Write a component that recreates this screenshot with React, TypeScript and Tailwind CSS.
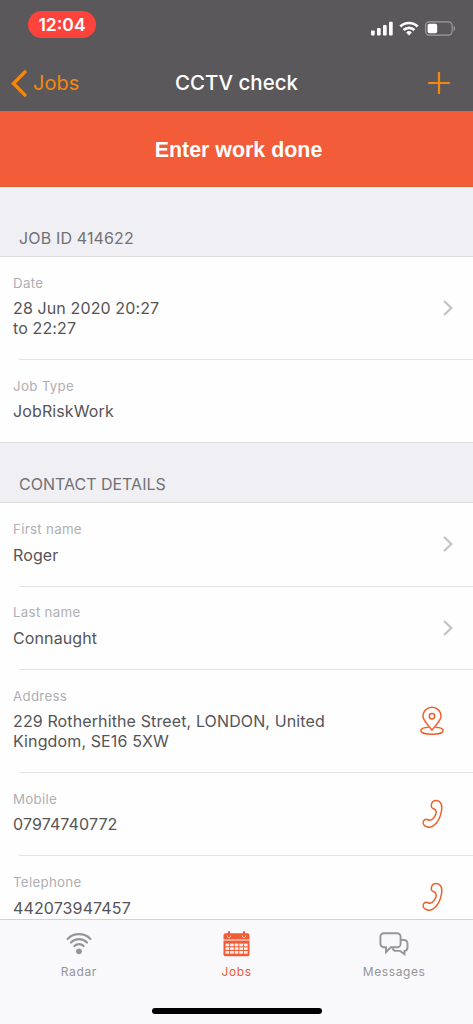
import type { ReactNode } from "react";
import { clsx } from "clsx";

const ChevronRight = () => (
  <svg className="h-[18px] w-3" viewBox="0 0 12 18" fill="none" stroke="#c2c2c6" strokeWidth="2.2">
    <path d="M2 2l7.3 7L2 16" />
  </svg>
);

const PinIcon = () => (
  <svg className="mr-[10px] h-[30px] w-6" viewBox="0 0 24 30" fill="none" stroke="#ee6029" strokeWidth="1.5" strokeLinejoin="round">
    <path d="M12 24.2C9.6 20.6 2.9 14.8 2.9 10.1a9.1 8.8 0 0 1 18.2 0c0 4.7-6.7 10.5-9.1 14.1Z" />
    <circle cx="12" cy="10.2" r="2.7" />
    <path d="M8.6 21.3C4.2 21.5.9 22.9.9 24.8c0 2.1 4.9 3.5 11.1 3.5s11.1-1.4 11.1-3.5c0-1.9-3.3-3.3-7.7-3.5" />
  </svg>
);

const PhoneIcon = () => (
  <svg className="mr-[10px] h-[30px] w-6" viewBox="0 0 24 30" fill="none" stroke="#ee6029" strokeWidth="1.5" strokeLinejoin="round">
    <path d="M14.4 1.7C16.7 1.2 19.5 2 20.7 3.9C22 6.2 21.8 12 20.4 16.5C18.9 20.9 15.7 25.4 12.5 27.3C9.6 29 5.2 28.1 3.7 25.7C2.7 23.9 3.3 21.5 5 20.5C6.9 19.6 8.3 21.5 10.1 21.3C13.1 20.8 16.3 16.2 16.2 12.9C16.2 9.3 12.6 10.4 11.6 8.2C10.8 5.7 11.9 2.5 14.4 1.7Z" />
  </svg>
);

const SignalIcon = () => (
  <svg className="h-[15px] w-[22px]" viewBox="0 0 22 15" fill="white">
    <rect x="0" y="9.5" width="3.7" height="5" rx="1" />
    <rect x="6" y="7" width="3.7" height="7.5" rx="1" />
    <rect x="12" y="4" width="3.7" height="10.5" rx="1" />
    <rect x="18" y="0.8" width="3.7" height="13.7" rx="1" />
  </svg>
);

const WifiIcon = () => (
  <svg className="h-[15px] w-5" viewBox="0 0 20 15" fill="none" stroke="white" strokeWidth="2.7">
    <path d="M1.3 5.5a12.5 12.5 0 0 1 17.4 0" />
    <path d="M4.6 9a7.8 7.8 0 0 1 10.8 0" />
    <path d="M10 14.4l-2.9-2.9a4.2 4.2 0 0 1 5.8 0Z" fill="white" stroke="none" />
  </svg>
);

const BatteryIcon = () => (
  <svg className="h-[15px] w-[31px]" viewBox="0 0 31 15" fill="none">
    <rect x="0.6" y="0.9" width="26.5" height="13.2" rx="3.6" stroke="#a09fa0" strokeWidth="1.1" />
    <rect x="2.6" y="2.8" width="9.6" height="9.4" rx="1.8" fill="white" />
    <path d="M28.6 5v5c2-.6 2-4.4 0-5Z" fill="#a09fa0" />
  </svg>
);

const RadarIcon = () => (
  <svg className="h-6 w-[26px]" viewBox="0 0 26 24" fill="none" stroke="#969598" strokeWidth="2.2" strokeLinecap="round">
    <path d="M1.6 6.9a16 16 0 0 1 22.8 0" />
    <path d="M5 10.5a11.2 11.2 0 0 1 16 0" />
    <path d="M8.4 14a6.5 6.5 0 0 1 9.2 0" />
    <circle cx="13" cy="19.3" r="2.9" fill="#969598" stroke="none" />
  </svg>
);

const columns = [2.5, 7.1, 11.7, 16.3, 20.9];
const lines = [12.6, 16.3, 20];

const CalendarIcon = () => (
  <svg className="h-[26px] w-[27px]" viewBox="0 0 27 26">
    <path d="M2.5 2.3h22a2 2 0 0 1 2 2v4.2H.5V4.3a2 2 0 0 1 2-2Z" fill="#f15b36" />
    <path d="M.5 9.6h26v13.6a2 2 0 0 1-2 2h-22a2 2 0 0 1-2-2Z" fill="#f15b36" />
    <path d="M4.2 4.4c.2 3 3.4 3 3.6 0M19.2 4.4c.2 3 3.4 3 3.6 0" fill="none" stroke="#fbe3de" strokeWidth="1" />
    <path d="M6 1.1v3.6M21 1.1v3.6" stroke="#f15b36" strokeWidth="2.2" strokeLinecap="round" />
    {lines.map((y) =>
      columns.map((x) => <rect key={`${x}-${y}`} x={x} y={y} width="3.7" height="2.7" fill="#fdeeea" />)
    )}
  </svg>
);

const MessagesIcon = () => (
  <svg className="h-6 w-[30px]" viewBox="0 0 30 24" fill="none" stroke="#969598" strokeWidth="1.9" strokeLinejoin="miter">
    <path d="M5 1.2h13a3.6 3.6 0 0 1 3.6 3.6v6.9a3.6 3.6 0 0 1-3.6 3.6h-6.2L7 20.2v-4.9H5a3.6 3.6 0 0 1-3.6-3.6V4.8A3.6 3.6 0 0 1 5 1.2Z" />
    <path d="M21.8 8h3.2a3.500 3.500 0 0 1 3.500 3.500v3.900a3.500 3.500 0 0 1-3 3.500v3.300L21 18.900h-4a4 4 0 0 1-3.500-2.600" />
  </svg>
);

interface RowProps {
  label: string;
  value: ReactNode;
  icon?: ReactNode;
  last?: boolean;
}

const Row = ({ label, value, icon, last }: RowProps) => (
  <li className="bg-[#fefefe]">
    <div className="flex items-center justify-between pr-[19.5px] pl-[13px]">
      <div className="pt-[15.7px] pb-[20.4px]">
        <p className="text-[13.3px] leading-5 tracking-[0.3px] text-[#b0afb2]">{label}</p>
        <p className="mt-[6.8px] text-[16px] leading-[19.5px] tracking-[0.12px] text-[#555457]">{value}</p>
      </div>
      {icon}
    </div>
    {!last && <div className="ml-[19px] h-px bg-[#e3e3e5]" />}
  </li>
);

const SectionTitle = ({ className, children }: { className?: string; children: ReactNode }) => (
  <h2
    className={clsx(
      "flex items-end border-b border-[#dcdce0] bg-[#efeff4] pb-2 pl-[19px] text-[16px] leading-5 text-[#727175]",
      className
    )}
  >
    {children}
  </h2>
);

interface TabProps {
  label: string;
  icon: ReactNode;
  active?: boolean;
}

const Tab = ({ label, icon, active }: TabProps) => (
  <button className="flex flex-1 flex-col items-center pt-[11px]">
    <span className="flex h-[26px] items-center">{icon}</span>
    <span
      className={clsx(
        "mt-[7px] text-[12px] leading-4 tracking-[0.6px]",
        active ? "text-[#ef5b35]" : "text-[#969598]"
      )}
    >
      {label}
    </span>
  </button>
);

export default function App() {
  return (
    <div className="flex h-[1024px] w-[473px] flex-col overflow-hidden bg-[#efeff4] font-['Inter',sans-serif]">
      <header className="h-[111px] shrink-0 bg-[#5a585a]">
        <div className="flex h-[54px] items-start justify-between pt-[11px] pr-[17px] pl-7">
          <span className="flex h-[27px] w-[68px] items-center justify-center rounded-full bg-[#fe433d] pt-px text-[17.5px] font-semibold text-white">
            12:04
          </span>
          <div className="flex items-center gap-[6px] pt-[10px]">
            <SignalIcon />
            <WifiIcon />
            <BatteryIcon />
          </div>
        </div>
        <div className="grid h-[57px] grid-cols-[1fr_auto_1fr] items-center px-[11px] pt-px">
          <button className="flex items-center gap-[6px] text-[#f7860e]">
            <svg className="h-[27px] w-4" viewBox="0 0 16 27" fill="none" stroke="currentColor" strokeWidth="3.4" strokeLinecap="round">
              <path d="M14 1.9L2.5 13.5 14 25.1" />
            </svg>
            <span className="text-[20px] leading-7">Jobs</span>
          </button>
          <h1 className="text-center text-[20.5px] leading-7 font-medium whitespace-nowrap text-white">CCTV check</h1>
          <svg className="mr-3 h-[22px] w-[22px] justify-self-end" viewBox="0 0 22 22" stroke="#f7860e" strokeWidth="2.2" strokeLinecap="round">
            <path d="M11 1v20M1 11h20" />
          </svg>
        </div>
      </header>
      <button className="h-[76px] shrink-0 border-b border-[#dc5a36] bg-[#f25c38] pt-[3px] pl-1 font-['Liberation_Sans',sans-serif] text-[21.4px] font-bold text-white">
        Enter work done
      </button>
      <main className="min-h-0 flex-1 overflow-hidden">
        <SectionTitle className="h-[70px] tracking-[0.15px]">JOB ID 414622</SectionTitle>
        <ul>
          <Row
            label="Date"
            value={
              <>
                28 Jun 2020 20:27
                <br />
                to 22:27
              </>
            }
            icon={<ChevronRight />}
          />
          <Row label="Job Type" value="JobRiskWork" last />
        </ul>
        <SectionTitle className="h-[61px] border-t">CONTACT DETAILS</SectionTitle>
        <ul>
          <Row label="First name" value="Roger" icon={<ChevronRight />} />
          <Row label="Last name" value="Connaught" icon={<ChevronRight />} />
          <Row
            label="Address"
            value={
              <>
                229 Rotherhithe Street, LONDON, United
                <br />
                Kingdom, SE16 5XW
              </>
            }
            icon={<PinIcon />}
          />
          <Row label="Mobile" value="07974740772" icon={<PhoneIcon />} />
          <Row label="Telephone" value="442073947457" icon={<PhoneIcon />} />
        </ul>
      </main>
      <nav className="flex h-[105px] shrink-0 flex-col border-t border-[#d4d4d7] bg-[#f9f8fb]">
        <div className="flex">
          <Tab label="Radar" icon={<RadarIcon />} />
          <Tab label="Jobs" icon={<CalendarIcon />} active />
          <Tab label="Messages" icon={<MessagesIcon />} />
        </div>
        <div className="mx-auto mt-auto mb-[10px] h-[6px] w-[170px] rounded-full bg-black" />
      </nav>
    </div>
  );
}
